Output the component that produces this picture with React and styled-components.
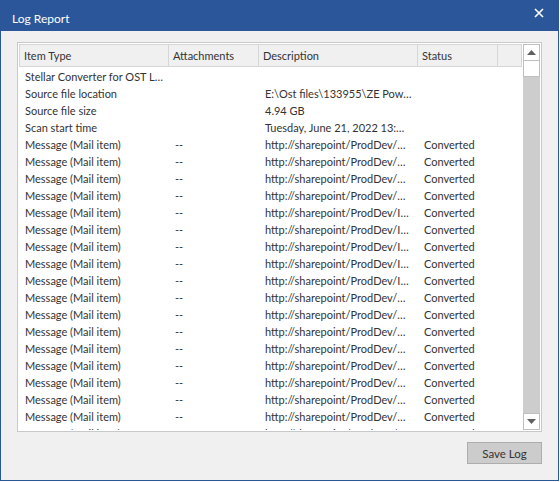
import React from 'react';
import styled, { createGlobalStyle } from 'styled-components';

const GlobalStyle = createGlobalStyle`
  html, body {
    margin: 0;
    padding: 0;
    background: #ffffff;
  }
  body {
    font-family: Lato, "Liberation Sans", sans-serif;
  }
`;

const Window = styled.div`
  width: 559px;
  height: 481px;
  box-sizing: border-box;
  border: 1px solid #2b579a;
  border-top: none;
  background: #f0f0f0;
  display: flex;
  flex-direction: column;
`;

const TitleBar = styled.div`
  height: 31px;
  margin: 0 -1px;
  background: #2b579a;
  display: flex;
  align-items: center;
  justify-content: space-between;
  padding: 0 12px 0 12px;
  color: #ffffff;
`;

const Title = styled.div`
  font-size: 12px;
  padding-top: 6px;
`;

const CloseButton = styled.div`
  width: 16px;
  height: 16px;
  margin-top: -6px;
  display: flex;
  align-items: center;
  justify-content: center;
`;

const Body = styled.div`
  flex: 1;
  display: flex;
  flex-direction: column;
  padding: 11px 16px 0 16px;
`;

const ListBox = styled.div`
  height: 390px;
  box-sizing: border-box;
  border: 1px solid #c9c9c9;
  background: #ffffff;
  padding: 1px;
  display: flex;
  overflow: hidden;
`;

const ListMain = styled.div`
  flex: 1;
  display: flex;
  flex-direction: column;
  overflow: hidden;
`;

const columns = '150px 90px 159px 80px 1fr';

const HeaderRow = styled.div`
  display: grid;
  grid-template-columns: ${columns};
  height: 23px;
  flex-shrink: 0;
`;

const HeaderCell = styled.div`
  box-sizing: border-box;
  background: #f0f0f0;
  border: 1px solid #d6d6d6;
  border-left: ${({ first }) => (first ? '1px solid #d6d6d6' : 'none')};
  padding-left: 4px;
  font-size: 11px;
  color: #333333;
  display: flex;
  align-items: center;
`;

const Rows = styled.div`
  flex: 1;
  overflow: hidden;
  padding-top: 1px;
`;

const Row = styled.div`
  display: grid;
  grid-template-columns: ${columns};
  height: 17px;
  align-items: center;
`;

const Cell = styled.div`
  font-size: 11px;
  color: #333333;
  white-space: nowrap;
  padding-left: 6px;
`;

const Scrollbar = styled.div`
  width: 17px;
  margin-left: 1px;
  display: flex;
  flex-direction: column;
  background: #cdcdcd;
`;

const ScrollButton = styled.div`
  height: 17px;
  box-sizing: border-box;
  background: #ffffff;
  border: 1px solid #bfbfbf;
  display: flex;
  align-items: center;
  justify-content: center;
  flex-shrink: 0;
`;

const Thumb = styled.div`
  height: 16px;
  box-sizing: border-box;
  background: #ffffff;
  border: 1px solid #bfbfbf;
  border-top: none;
`;

const Track = styled.div`
  flex: 1;
`;

const Footer = styled.div`
  display: flex;
  justify-content: flex-end;
  padding-top: 10px;
`;

const Button = styled.button`
  width: 75px;
  height: 22px;
  box-sizing: border-box;
  background: #cccccc;
  border: 1px solid #adadad;
  font-family: Lato, "Liberation Sans", sans-serif;
  font-size: 11.5px;
  color: #333333;
  padding: 0;
`;

const Arrow = ({ down }) => (
  <svg width="9" height="5" viewBox="0 0 9 5">
    <polygon points={down ? '0,0 9,0 4.5,5' : '0,5 9,5 4.5,0'} fill="#606060" />
  </svg>
);

const prodDev = 'http://sharepoint/ProdDev/…';
const prodDevI = 'http://sharepoint/ProdDev/I…';

const rows = [
  ['Stellar Converter for OST L…', '', '', ''],
  ['Source file location', '', 'E:\\Ost files\\133955\\ZE Pow…', ''],
  ['Source file size', '', '4.94 GB', ''],
  ['Scan start time', '', 'Tuesday, June 21, 2022 13:…', ''],
  ...Array.from({ length: 18 }, (_, i) => [
    'Message (Mail item)',
    '--',
    i >= 4 && i <= 8 ? prodDevI : prodDev,
    'Converted',
  ]),
];

const App = () => (
  <>
    <GlobalStyle />
    <Window>
      <TitleBar>
        <Title>Log Report</Title>
        <CloseButton>
          <svg width="10" height="10" viewBox="0 0 10 10">
            <path d="M1 1 L9 9 M9 1 L1 9" stroke="#ffffff" strokeWidth="1.6" />
          </svg>
        </CloseButton>
      </TitleBar>
      <Body>
        <ListBox>
          <ListMain>
            <HeaderRow>
              <HeaderCell first>Item Type</HeaderCell>
              <HeaderCell>Attachments</HeaderCell>
              <HeaderCell>Description</HeaderCell>
              <HeaderCell>Status</HeaderCell>
              <HeaderCell />
            </HeaderRow>
            <Rows>
              {rows.map((r, i) => (
                <Row key={i}>
                  <Cell>{r[0]}</Cell>
                  <Cell>{r[1]}</Cell>
                  <Cell>{r[2]}</Cell>
                  <Cell>{r[3]}</Cell>
                  <Cell />
                </Row>
              ))}
            </Rows>
          </ListMain>
          <Scrollbar>
            <ScrollButton>
              <Arrow />
            </ScrollButton>
            <Thumb />
            <Track />
            <ScrollButton>
              <Arrow down />
            </ScrollButton>
          </Scrollbar>
        </ListBox>
        <Footer>
          <Button>Save Log</Button>
        </Footer>
      </Body>
    </Window>
  </>
);

export default App;
